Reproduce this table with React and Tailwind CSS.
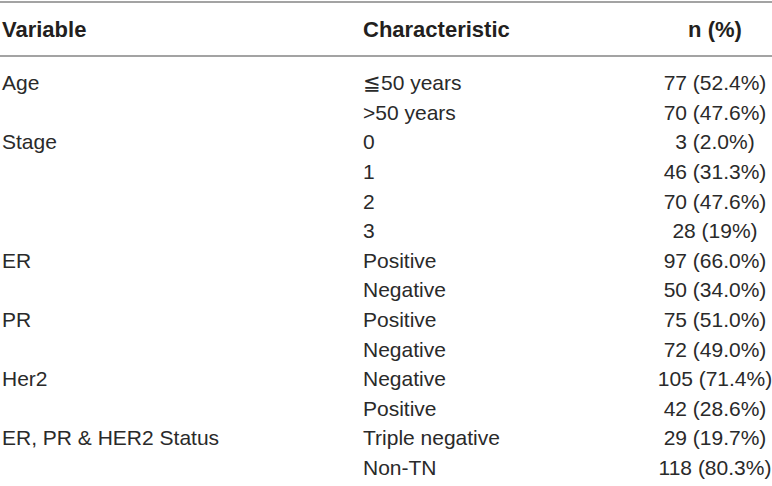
import React from 'react';

const rows = [
  ['Age', '≦50 years', '77 (52.4%)'],
  ['', '>50 years', '70 (47.6%)'],
  ['Stage', '0', '3 (2.0%)'],
  ['', '1', '46 (31.3%)'],
  ['', '2', '70 (47.6%)'],
  ['', '3', '28 (19%)'],
  ['ER', 'Positive', '97 (66.0%)'],
  ['', 'Negative', '50 (34.0%)'],
  ['PR', 'Positive', '75 (51.0%)'],
  ['', 'Negative', '72 (49.0%)'],
  ['Her2', 'Negative', '105 (71.4%)'],
  ['', 'Positive', '42 (28.6%)'],
  ['ER, PR & HER2 Status', 'Triple negative', '29 (19.7%)'],
  ['', 'Non-TN', '118 (80.3%)'],
];

const App = () => {
  return (
    <div className="w-[772px] h-[486px] bg-white text-[#231f20] font-['Liberation_Sans',Arial,sans-serif] overflow-hidden">
      <div className="h-[2px] bg-[#a3a3a3] mt-[1px]" />
      {/* header */}
      <div className="grid grid-cols-[361px_293px_118px] pl-[2px] h-[52px] items-center text-[22px] font-bold">
        <div>Variable</div>
        <div>Characteristic</div>
        <div className="text-center">n (%)</div>
      </div>
      <div className="h-[2px] bg-[#a3a3a3]" />

      <div className="pt-[11px]">
        {rows.map((r, i) => (
          <div
            key={i}
            className="grid grid-cols-[361px_293px_118px] pl-[2px] h-[29.6px] items-center text-[21px] leading-none text-[#2a2a2a]"
          >
            <div>{r[0]}</div>
            <div>{r[1]}</div>
            <div className="text-center">{r[2]}</div>
          </div>
        ))}
      </div>
    </div>
  );
};

export default App;
